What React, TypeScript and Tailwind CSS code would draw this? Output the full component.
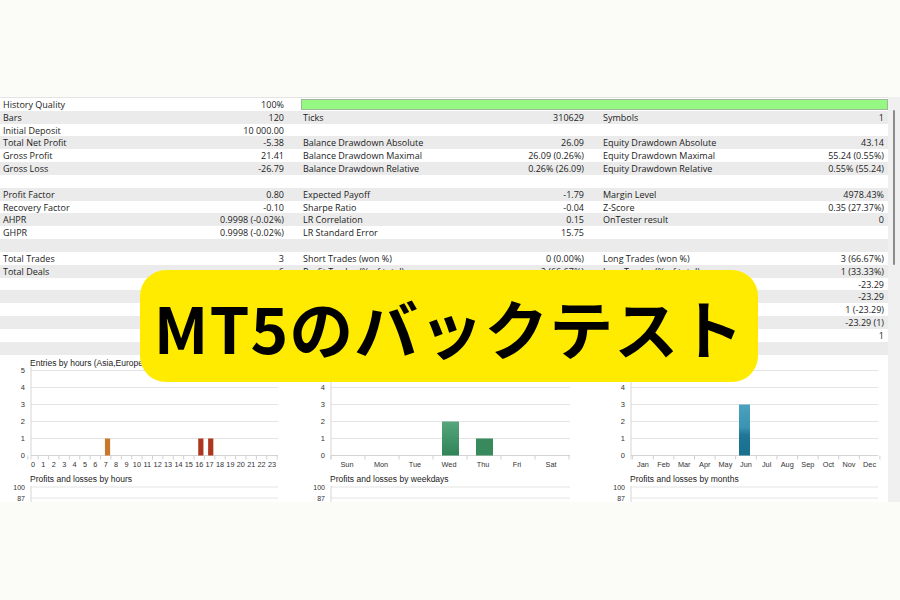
import React from "react";

type Row = [string, string, string, string, string, string];

const rows: Row[] = [
  ["History Quality", "100%", "", "", "", ""],
  ["Bars", "120", "Ticks", "310629", "Symbols", "1"],
  ["Initial Deposit", "10 000.00", "", "", "", ""],
  ["Total Net Profit", "-5.38", "Balance Drawdown Absolute", "26.09", "Equity Drawdown Absolute", "43.14"],
  ["Gross Profit", "21.41", "Balance Drawdown Maximal", "26.09 (0.26%)", "Equity Drawdown Maximal", "55.24 (0.55%)"],
  ["Gross Loss", "-26.79", "Balance Drawdown Relative", "0.26% (26.09)", "Equity Drawdown Relative", "0.55% (55.24)"],
  ["", "", "", "", "", ""],
  ["Profit Factor", "0.80", "Expected Payoff", "-1.79", "Margin Level", "4978.43%"],
  ["Recovery Factor", "-0.10", "Sharpe Ratio", "-0.04", "Z-Score", "0.35 (27.37%)"],
  ["AHPR", "0.9998 (-0.02%)", "LR Correlation", "0.15", "OnTester result", "0"],
  ["GHPR", "0.9998 (-0.02%)", "LR Standard Error", "15.75", "", ""],
  ["", "", "", "", "", ""],
  ["Total Trades", "3", "Short Trades (won %)", "0 (0.00%)", "Long Trades (won %)", "3 (66.67%)"],
  ["Total Deals", "6", "Profit Trades (% of total)", "2 (66.67%)", "Loss Trades (% of total)", "1 (33.33%)"],
  ["", "", "Largest profit trade", "11.27", "Largest loss trade", "-23.29"],
  ["", "", "Average profit trade", "9.05", "Average loss trade", "-23.29"],
  ["", "", "Maximum consecutive wins ($)", "2 (18.10)", "Maximum consecutive losses ($)", "1 (-23.29)"],
  ["", "", "Maximal consecutive profit (count)", "18.10 (2)", "Maximal consecutive loss (count)", "-23.29 (1)"],
  ["", "", "Average consecutive wins", "2", "Average consecutive losses", "1"],
  ["", "", "", "", "", ""],
];

function Cell({ label, value, last }: { label: string; value: string; last?: boolean }) {
  return (
    <div className={`flex items-center justify-between pl-[3px] ${last ? "pr-[4px]" : "pr-[16px]"}`}>
      <span>{label}</span>
      <span>{value}</span>
    </div>
  );
}

function StatsTable() {
  return (
    <div className="border-t border-[#e4e4e4]">
      {rows.map((r, i) => (
        <div
          key={i}
          className={`grid h-[12.83px] grid-cols-[300px_300px_288px] leading-none ${i % 2 === 1 ? "bg-[#ebebeb]" : "bg-white"}`}
        >
          <Cell label={r[0]} value={r[1]} />
          {i === 0 ? (
            <div className="col-span-2 flex items-center pl-[1px]">
              <div className="h-[11px] w-full border border-[#9fb79a] bg-[#95f882]" />
            </div>
          ) : (
            <>
              <Cell label={r[2]} value={r[3]} />
              <Cell label={r[4]} value={r[5]} last />
            </>
          )}
        </div>
      ))}
    </div>
  );
}

type Bar = { x: number; w: number; v: number; fill: string };

function Chart({
  width,
  title,
  title2,
  labels,
  center,
  boundaries,
  bars,
  right,
  defs,
}: {
  width: number;
  title: string;
  title2: string;
  labels: string[];
  center: (i: number) => number;
  boundaries: number[];
  bars: Bar[];
  right: number;
  defs?: React.ReactNode;
}) {
  const y = (v: number) => 100.5 - 17 * v;
  const axisX = 31;
  return (
    <svg width={width} height={147} className="block" style={{ fontFamily: '"Liberation Sans", Arial, sans-serif' }}>
      {defs && <defs>{defs}</defs>}
      <text x={30} y={11} fontSize={8.5} fill="#222">
        {title}
      </text>
      {[0, 1, 2, 3, 4, 5].map((v) => (
        <g key={v}>
          <line x1={axisX} x2={right} y1={y(v)} y2={y(v)} stroke={v === 0 ? "#d4d4d4" : "#e3e3e3"} strokeWidth={1} />
          <text x={25} y={y(v) + 2.6} fontSize={7.5} fill="#333" textAnchor="end">
            {v}
          </text>
        </g>
      ))}
      <line x1={axisX} x2={axisX} y1={12} y2={104.5} stroke="#d6d6d6" />
      {boundaries.map((b, i) => (
        <line key={i} x1={b} x2={b} y1={100.5} y2={104.5} stroke="#d0d0d0" />
      ))}
      {labels.map((l, i) => (
        <text key={l} x={center(i)} y={111.5} fontSize={7.3} fill="#333" textAnchor="middle">
          {l}
        </text>
      ))}
      {bars.map((b, i) => (
        <rect key={i} x={b.x} y={y(b.v)} width={b.w} height={17 * b.v} fill={b.fill} />
      ))}
      <text x={30} y={127} fontSize={8.5} fill="#222">
        {title2}
      </text>
      <line x1={axisX} x2={right} y1={132} y2={132} stroke="#e3e3e3" />
      <line x1={axisX} x2={right} y1={143} y2={143} stroke="#e3e3e3" />
      <line x1={axisX} x2={axisX} y1={131} y2={147} stroke="#d6d6d6" />
      <text x={25} y={134.6} fontSize={7} fill="#333" textAnchor="end">
        100
      </text>
      <text x={25} y={145.6} fontSize={7} fill="#333" textAnchor="end">
        87
      </text>
    </svg>
  );
}

const hours = Array.from({ length: 24 }, (_, i) => String(i));
const hourCenter = (i: number) => 33 + 10.39 * i;
const days = ["Sun", "Mon", "Tue", "Wed", "Thu", "Fri", "Sat"];
const dayCenter = (i: number) => 47 + 34 * i;
const months = ["Jan", "Feb", "Mar", "Apr", "May", "Jun", "Jul", "Aug", "Sep", "Oct", "Nov", "Dec"];
const monthCenter = (i: number) => 43 + 20.6 * i;

function Charts() {
  return (
    <div className="flex h-[147px] bg-white">
      <Chart
        width={300}
        title="Entries by hours (Asia,Europe,America)"
        title2="Profits and losses by hours"
        labels={hours}
        center={hourCenter}
        boundaries={Array.from({ length: 25 }, (_, i) => 27.8 + 10.39 * i)}
        right={278}
        bars={[
          { x: hourCenter(7) - 0.8, w: 5.2, v: 1, fill: "#c8782b" },
          { x: hourCenter(16) - 1, w: 5.2, v: 1, fill: "#ad3620" },
          { x: hourCenter(17) - 1.5, w: 5.2, v: 1, fill: "#ad3620" },
        ]}
      />
      <Chart
        width={300}
        title="Entries by weekdays"
        title2="Profits and losses by weekdays"
        labels={days}
        center={dayCenter}
        boundaries={Array.from({ length: 8 }, (_, i) => 31 + 34 * i)}
        right={270}
        defs={
          <linearGradient id="wedFill" x1="0" y1="0" x2="0" y2="1">
            <stop offset="0" stopColor="#57a67c" />
            <stop offset="1" stopColor="#2f8456" />
          </linearGradient>
        }
        bars={[
          { x: dayCenter(3) - 7, w: 17, v: 2, fill: "url(#wedFill)" },
          { x: dayCenter(4) - 7, w: 17, v: 1, fill: "#38895c" },
        ]}
      />
      <Chart
        width={288}
        title="Entries by months"
        title2="Profits and losses by months"
        labels={months}
        center={monthCenter}
        boundaries={Array.from({ length: 13 }, (_, i) => 32.7 + 20.6 * i)}
        right={278}
        defs={
          <linearGradient id="junFill" x1="0" y1="0" x2="0" y2="1">
            <stop offset="0" stopColor="#4ba2be" />
            <stop offset="0.45" stopColor="#3a93b1" />
            <stop offset="0.6" stopColor="#1f7795" />
            <stop offset="1" stopColor="#17708e" />
          </linearGradient>
        }
        bars={[{ x: monthCenter(5) - 7, w: 11, v: 3, fill: "url(#junFill)" }]}
      />
    </div>
  );
}

export default function App() {
  return (
    <div
      className="relative h-[600px] w-[900px] overflow-hidden bg-[#fbfcf7] text-[9px] text-[#1b1b1b]"
      style={{ fontFamily: '"Open Sans", "Noto Sans", sans-serif' }}
    >
      <div className="h-[97px]" />
      <div className="flex">
        <div className="w-[888px]">
          <StatsTable />
          <Charts />
        </div>
        <div className="relative w-[12px] bg-[#f0f0f0]">
          <div className="absolute left-[5px] top-[13px] h-[155px] w-[2px] rounded-full bg-[#8c8c8c]" />
        </div>
      </div>

      {/* title banner */}
      <div className="absolute left-[140px] top-[270px] flex h-[112px] w-[618px] items-center justify-center rounded-[26px] bg-[#ffeb00]">
        <span
          className="text-[64px] font-bold leading-none tracking-[1px] text-black"
          style={{ fontFamily: '"Noto Sans CJK JP", "Noto Sans", sans-serif' }}
        >
          MT5のバックテスト
        </span>
      </div>
    </div>
  );
}
